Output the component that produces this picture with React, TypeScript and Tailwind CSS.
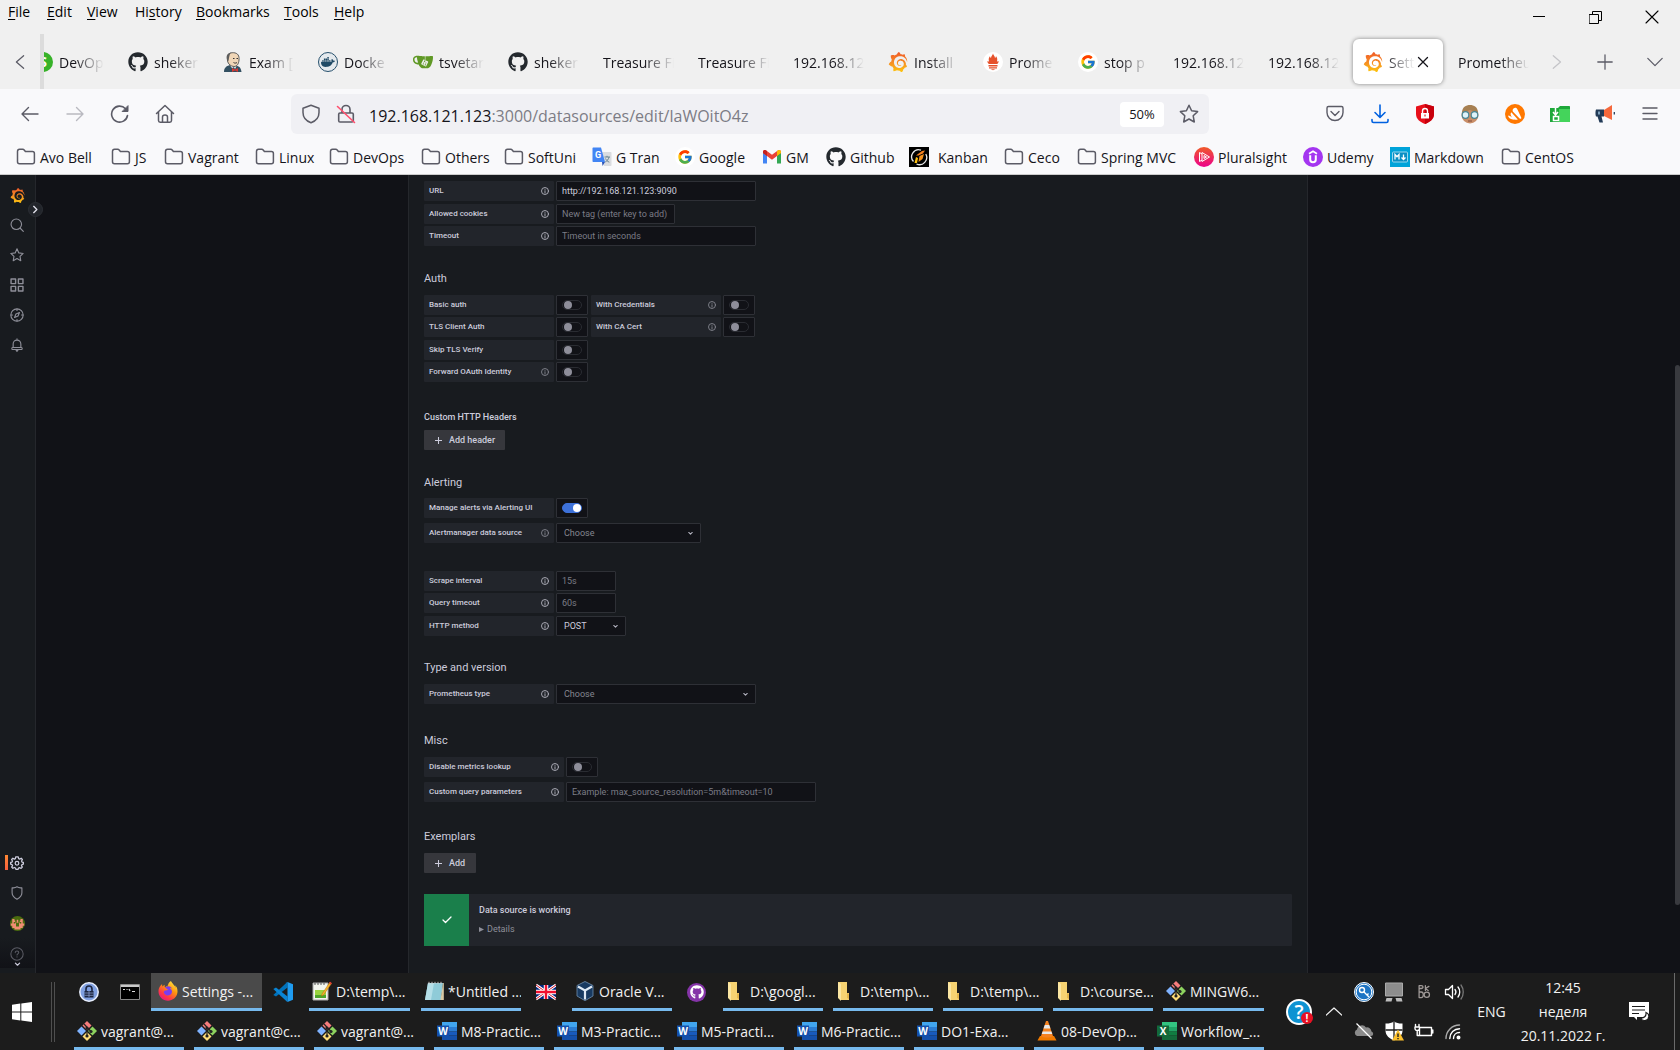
import React, { useState } from 'react';
import { FaGithub, FaFirefoxBrowser } from 'react-icons/fa';
import { FcGoogle } from 'react-icons/fc';
import { SiGrafana, SiDocker, SiGitea } from 'react-icons/si';

type Kids = { children: React.ReactNode };

/* ---------- shared drawings ---------- */

function Line({ children, size = 20, w = 1.4, cls = '', box = 20 }: Kids & { size?: number; w?: number; cls?: string; box?: number }) {
  return (
    <svg width={size} height={size} viewBox={`0 0 ${box} ${box}`} fill="none" stroke="currentColor" strokeWidth={w} strokeLinecap="round" strokeLinejoin="round" className={`shrink-0 ${cls}`} aria-hidden="true">
      {children}
    </svg>
  );
}

function Pic({ children, size = 20 }: Kids & { size?: number }) {
  return (
    <svg width={size} height={size} viewBox="0 0 20 20" className="shrink-0" aria-hidden="true">
      {children}
    </svg>
  );
}

function Gradients() {
  return (
    <svg width="0" height="0" className="absolute" aria-hidden="true">
      <defs>
        <linearGradient id="graf" x1="0" y1="0" x2="0" y2="1">
          <stop offset="0" stopColor="#f05a28" />
          <stop offset="0.5" stopColor="#f58a24" />
          <stop offset="1" stopColor="#fdc50f" />
        </linearGradient>
        <linearGradient id="fire" x1="0.9" y1="0" x2="0.2" y2="1">
          <stop offset="0" stopColor="#fff44f" />
          <stop offset="0.4" stopColor="#ff980e" />
          <stop offset="0.75" stopColor="#ff3647" />
          <stop offset="1" stopColor="#e31587" />
        </linearGradient>
        <linearGradient id="plural" x1="0" y1="0" x2="0" y2="1">
          <stop offset="0" stopColor="#f05a28" />
          <stop offset="1" stopColor="#ec008c" />
        </linearGradient>
      </defs>
    </svg>
  );
}

const Grafana = ({ size = 20 }: { size?: number }) => <SiGrafana size={size} fill="url(#graf)" className="shrink-0" />;
const Github = () => <FaGithub size={20} className="shrink-0 text-[#24292e]" />;

const Jenkins = () => (
  <Pic>
    <path d="M1 20c0-4 2-6 6-7l6 .5c4 1 5 3 5.500 6.500z" fill="#335061" />
    <path d="M6 12l3 4 2-1 1 2 2-4-1-2H7z" fill="#fff" />
    <path d="M4.500 6C4 2 7 .5 10.500.7 15 1 16.500 4 16 8c-.3 4-2 6.500-5 6.500S5 12 4.500 9z" fill="#f0d6b7" stroke="#3a3a3a" strokeWidth=".8" />
    <path d="M4 8C3 4 4 1.500 8 .6 6.500 2.500 6.500 4 6 6l-.5 3z" fill="#5d5d5d" />
    <path d="M10 6.500h1.500M13.500 6.500H15M10.500 10.500c1 .8 2.500.8 3.500 0" stroke="#333" strokeWidth="1" fill="none" />
    <path d="M9 16l3 1.500 3-1.500v4l-3-1.500L9 20z" fill="#d33833" />
  </Pic>
);

const Prometheus = () => (
  <Pic>
    <circle cx="10" cy="10" r="10" fill="#fff" />
    <path d="M10 1.500c.4 1.800 2 2.600 2 4.500 1-.5 1-1.300.9-2 1.300 1.600 1.800 3.500 1 5.600l1.900-.4c-.2 1.200-.8 2-1.600 2.800H5.800C5 11.200 4.400 10.400 4.200 9.200l1.900.4C5.300 7.500 5.800 5.600 7.100 4c-.1.7-.1 1.500.9 2 0-1.900 1.600-2.700 2-4.500z" fill="#e6522c" />
    <path d="M5.500 13h9v1.500h-9zM6 15.200h8v1.300H6zM7.500 17.200h5l-2.500 1z" fill="#e6522c" />
  </Pic>
);

const Google = () => (
  <span className="flex h-5 w-5 shrink-0 items-center justify-center rounded-full bg-white">
    <FcGoogle size={16} />
  </span>
);

const Docker = () => (
  <span className="flex h-5 w-5 shrink-0 items-center justify-center rounded-full border border-[#27516d] bg-[#e4e9ed] text-[#1f4a66]">
    <SiDocker size={14} />
  </span>
);

const SoftwareUni = () => (
  <Pic>
    <circle cx="10" cy="10" r="10" fill="#37b229" />
    <text x="10" y="15" textAnchor="middle" fontSize="14" fontWeight="700" fill="#fff" fontFamily="Open Sans, sans-serif">S</text>
  </Pic>
);

const Folder = () => (
  <Line w={1.5}><path d="M1.500 4.500c0-1.400.8-2.200 2-2.200h3.200c.8 0 1.200.3 1.700.9l1 1.300h7c1.300 0 2 .8 2 2v8.300c0 1.200-.8 2-2 2H3.500c-1.200 0-2-.8-2-2z" /></Line>
);

const Translate = () => (
  <Pic>
    <path d="M8 5h10.500c.6 0 1 .4 1 1v12c0 .6-.4 1-1 1H12z" fill="#dadce0" />
    <path d="M12.500 10h5.500M15 8.800V10M17 10c-.5 2.500-2 4-3.800 5M13.500 11.500c.8 1.700 2 2.900 3.800 3.700" stroke="#607d8b" strokeWidth=".9" fill="none" />
    <path d="M1.500.5H9L13 15H1.500C.9 15 .5 14.600.5 14V1.500c0-.6.4-1 1-1z" fill="#4285f4" />
    <path d="M10 15h3l-2.500 4z" fill="#2b55b8" />
    <text x="6" y="11" textAnchor="middle" fontSize="9" fontWeight="700" fill="#fff" fontFamily="Roboto, sans-serif">G</text>
  </Pic>
);

const Gmail = () => (
  <Pic>
    <path d="M1 16.500V5l4 3v8.500z" fill="#4285f4" />
    <path d="M15 16.500V8l4-3v11.500z" fill="#34a853" />
    <path d="M1 6V4.800C1 3 3 2.500 4.200 3.400L10 7.800l5.800-4.400C17 2.500 19 3 19 4.800V6l-9 6.800z" fill="#ea4335" />
    <path d="M15 4l.8-.6C17 2.500 19 3 19 4.800V6l-4 3z" fill="#fbbc04" />
    <path d="M1 6V4.800C1 3.500 2 3 3 3l2 1v5z" fill="#c5221f" />
  </Pic>
);

const Kanban = () => (
  <Pic>
    <path d="M0 0h20v20H0z" fill="#000" />
    <path d="M4.500 14.500A7 7 0 0 1 12 3.200M16.800 7A7.200 7.200 0 0 1 7.500 17" stroke="#e8e8e8" strokeWidth="1.300" fill="none" />
    <path d="M5.500 16l1.500-6 2 1-1 5z" fill="#ffc20e" />
    <path d="M7 8.500l6-4.500 3-.5-2 3-4.500 2z" fill="#f58220" />
    <path d="M9.500 15l1-6 4.500-2-1.500 5z" fill="#f7941d" />
  </Pic>
);

const Pluralsight = () => (
  <Pic>
    <circle cx="10" cy="10" r="10" fill="url(#plural)" />
    <path d="M5.500 5.500v9l2.500-1.400M8 5.500v9l7.500-4.500zM10 8.500v3l2.500-1.500z" fill="none" stroke="#fff" strokeWidth="1" />
    <path d="M5.500 5.500L8 7" stroke="#fff" strokeWidth="1" />
  </Pic>
);

const Udemy = () => (
  <Pic>
    <circle cx="10" cy="10" r="10" fill="#a435f0" />
    <path d="M6 6.800L10 4.300l4 2.500" stroke="#fff" strokeWidth="1.700" fill="none" />
    <path d="M7.200 8.200v4.300a2.800 2.800 0 0 0 5.600 0V8.200" stroke="#fff" strokeWidth="2" fill="none" />
  </Pic>
);

const MarkdownIcon = () => (
  <Pic>
    <path d="M0 0h20v20H0z" fill="#00a3d9" />
    <rect x="2.500" y="5" width="15" height="10" rx="1" fill="#0a8fc4" stroke="#bfe7f6" strokeWidth=".8" />
    <path d="M5 12.500v-5l2 2.300 2-2.300v5M13.500 7.500v4.500M11.500 10.500l2 2 2-2" stroke="#fff" strokeWidth="1.300" fill="none" />
  </Pic>
);

/* ---------- browser chrome ---------- */

const menus = [
  ['F', 'ile', '', 'w-[39px]'],
  ['E', 'dit', '', 'w-10'],
  ['V', 'iew', '', 'w-12'],
  ['s', 'tory', 'Hi', 'w-[61px]'],
  ['B', 'ookmarks', '', 'w-[88px]'],
  ['T', 'ools', '', 'w-[50px]'],
  ['H', 'elp', '', 'w-10'],
];

function TopBar() {
  return (
    <div className="flex h-[34px] items-start justify-between">
      <nav className="flex pl-2 leading-6">
        {menus.map(([key, rest, before, w]) => (
          <button key={rest} className={`${w} whitespace-nowrap text-left text-black`}>
            {before}<span className="underline underline-offset-2">{key}</span>{rest}
          </button>
        ))}
      </nav>
      <div className="flex h-[34px] text-black">
        <button aria-label="Minimize" className="flex w-[57px] items-center justify-center"><Line size={12} box={12} w={1}><path d="M0 5.500h12" /></Line></button>
        <button aria-label="Restore" className="flex w-[57px] items-center justify-center"><Line size={13} box={13} w={1}><path d="M.5 3.500h9v9h-9zM3.500 3V.5h9v9H10" /></Line></button>
        <button aria-label="Close" className="flex w-14 items-center justify-center"><Line size={14} box={14} w={1.1}><path d="M1 1l12 12M13 1L1 13" /></Line></button>
      </div>
    </div>
  );
}

const tabs: [React.ReactNode, string][] = [
  [<SoftwareUni />, 'DevOp'],
  [<Github />, 'sheker'],
  [<Jenkins />, 'Exam ['],
  [<Docker />, 'Docke'],
  [<SiGitea size={20} className="shrink-0 text-[#609926]" />, 'tsvetar'],
  [<Github />, 'sheker'],
  [null, 'Treasure Fi'],
  [null, 'Treasure Fi'],
  [null, '192.168.12'],
  [<Grafana />, 'Install'],
  [<Prometheus />, 'Prome'],
  [<Google />, 'stop p'],
  [null, '192.168.12'],
  [null, '192.168.12'],
  [<Grafana />, 'Sett'],
  [null, 'Prometheu'],
];

function TabStrip() {
  return (
    <div className="flex h-[55px] items-center text-[#5b5b66]">
      <button aria-label="Scroll tabs left" className="flex w-10 shrink-0 justify-center"><Line size={18}><path d="M14 3l-8 7 8 7" /></Line></button>
      <div className="flex h-full min-w-0 flex-1 items-center overflow-hidden border-l-4 border-[#dcdcdc]">
        <div className="-ml-[21px] flex gap-[5px]" role="tablist">
          {tabs.map(([icon, title], i) => {
            const active = i === 14;
            return (
              <div key={i} className={`flex h-[45px] w-[90px] shrink-0 items-center rounded-md pl-[10px] text-[#15141a] ${active ? 'bg-white pr-3 shadow-[0_0_4px_rgba(0,0,0,0.45)]' : 'pr-[9px]'}`}>
                <button role="tab" aria-selected={active} className="flex min-w-0 flex-1 items-center gap-[6px]">
                  {icon}
                  <span className="min-w-0 flex-1 overflow-hidden whitespace-nowrap pt-0.5 text-left leading-6 [mask-image:linear-gradient(to_left,transparent,black_30px)]">{title}</span>
                </button>
                {active && <button aria-label="Close tab" className="mx-[2px]"><Line size={12} box={12} w={1.3}><path d="M1.500 1.500l9 9M10.500 1.500l-9 9" /></Line></button>}
              </div>
            );
          })}
        </div>
      </div>
      <button aria-label="Scroll tabs right" className="flex w-10 shrink-0 justify-center pr-2 text-[#c4c4c8]"><Line size={18}><path d="M7 3l8 7-8 7" /></Line></button>
      <button aria-label="New tab" className="flex w-[50px] shrink-0 justify-center"><Line size={18}><path d="M10 2v16M2 10h16" /></Line></button>
      <button aria-label="List all tabs" className="flex w-[50px] shrink-0 justify-center"><Line size={18}><path d="M2 6l8 8 8-8" /></Line></button>
    </div>
  );
}

const extensions: [string, React.ReactNode][] = [
  ['Pocket', <Line><path d="M3.500 2.500h13c1 0 1.500.6 1.500 1.500v4.500a8 8 0 0 1-16 0V4c0-.9.5-1.500 1.500-1.500zM6 7.500l4 4 4-4" /></Line>],
  ['Downloads', <span className="text-[#0061e0]"><Line w={1.6}><path d="M10 1v12M5 8.500l5 5 5-5M2 15.500v1.500c0 1 .6 1.500 1.500 1.500h13c.9 0 1.500-.5 1.500-1.500v-1.500" /></Line></span>],
  ['Ad blocker', <Pic><path d="M10 0l9 2.500V10c0 5-4 8-9 10-5-2-9-5-9-10V2.500z" fill="#e8101a" /><path d="M10 0l9 2.500V10c0 5-4 8-9 10z" fill="#c8000c" /><path d="M6 9h8v5.500H6z" fill="#fff" /><path d="M7.500 9V7a2.500 2.500 0 0 1 5 0v2" stroke="#fff" strokeWidth="1.400" fill="none" /><path d="M10 10.500v2" stroke="#d00" /></Pic>],
  ['Reader', <Pic><circle cx="10" cy="11" r="8.500" fill="#c98e68" /><path d="M2 9C2 3 6 1 10 1s8 2 8 8L10 6z" fill="#a78052" /><circle cx="5.500" cy="11" r="3.300" fill="#dff3fa" stroke="#4a8796" strokeWidth="1.200" /><circle cx="14.500" cy="11" r="3.300" fill="#dff3fa" stroke="#4a8796" strokeWidth="1.200" /><path d="M8 17h4" stroke="#7e4c3e" /></Pic>],
  ['Avast', <Pic><circle cx="10" cy="10" r="10" fill="#ff7800" /><path d="M8.500 4.500c1.300-1.300 3-1 3.700.5l4 8.500c.5 1.200-.7 1.800-1.600 1L8.300 8C7.200 6.900 7.500 5.500 8.500 4.500z" fill="#fff" /><path d="M6.300 8.300l6.500 7.200c-1.800.6-3.800.4-5.500-.4L5.500 10z" fill="#fff" /><path d="M3.500 11.500c2 .5 4 2 5.500 4-2.300.3-4.300-.7-5.300-2.200-.5-.7-.7-1.400-.2-1.800z" fill="#fff" /></Pic>],
  ['Downloader', <Pic><path d="M0 4h8l2-2h9c.6 0 1 .4 1 1v15H0z" fill="#1ea83a" /><path d="M9 5h11v13H9z" fill="#44d45b" /><path d="M5.500 4v6M3 8l2.500 3L8 8M3.500 12.500h5v4h-5z" stroke="#fff" strokeWidth="1.500" fill="none" /></Pic>],
  ['Announcements', <Pic><path d="M9 6l8-5v15l-8-4z" fill="#f5683c" /><path d="M1 5.500h8v7H6.500l1.500 6H4.500l-2-6H1C.3 11 .3 7 1 5.500z" fill="#233b57" /><path d="M4 7.500v3" stroke="#9fc3dc" strokeWidth="1.500" /><path d="M19.300 8v2.500" stroke="#233b57" strokeWidth="1.300" /></Pic>],
  ['Menu', <Line><path d="M3 4h14M3 9.500h14M3 15h14" /></Line>],
];

function Toolbar() {
  return (
    <div className="flex h-[50px] items-center pl-[7px] pr-2 text-[#5b5b66]">
      <div className="flex w-[284px] shrink-0">
        <button aria-label="Back" className="flex w-[45px] justify-center"><Line><path d="M18 10H2M8.500 3.500L2 10l6.500 6.500" /></Line></button>
        <button aria-label="Forward" className="flex w-[45px] justify-center text-[#b9b9c0]"><Line><path d="M2 10h16M11.500 3.500L18 10l-6.500 6.500" /></Line></button>
        <button aria-label="Reload" className="flex w-[45px] justify-center"><Line w={1.6}><path d="M17.500 11.500a8 8 0 1 1-2-6.800" /><path d="M18 2v5.500h-5.500z" fill="currentColor" strokeWidth="1" /></Line></button>
        <button aria-label="Home" className="flex w-[45px] justify-center"><Line w={1.5}><path d="M1.500 9.500L10 1.500l8.500 8M3.500 8v8.500c0 1 .6 1.700 1.700 1.700h9.600c1.100 0 1.700-.7 1.700-1.700V8M7.500 18v-5c0-1.300.8-2 2.500-2s2.500.7 2.500 2v5" /></Line></button>
      </div>
      <div className="flex h-10 min-w-0 flex-1 items-center rounded-md bg-[#f0f0f4] pl-[10px] pr-[10px]">
        <Line w={1.5}><path d="M10 1.200l8 3v4.300c0 5-3.200 8.500-8 10.200-4.800-1.700-8-5.200-8-10.200V4.200z" /></Line>
        <span className="ml-[15px] flex"><Line w={1.6}><path d="M6 9V5.500a4 4 0 0 1 8 0V9M4 9h12c.8 0 1.300.5 1.300 1.300v6.400c0 .8-.5 1.300-1.300 1.300H4c-.8 0-1.300-.5-1.300-1.300v-6.400C2.700 9.500 3.200 9 4 9z" /><path d="M1.500 2.500l17 16" stroke="#ff4f6e" /></Line></span>
        <div className="ml-[13px] min-w-0 flex-1 truncate pt-[3px] text-base text-[#7c7c85]">
          <span className="text-[#15141a]">192.168.121.123</span>:3000/datasources/edit/laWOitO4z
        </div>
        <button className="h-[25px] w-11 rounded bg-white pt-px text-[13px] text-[#15141a]">50%</button>
        <button aria-label="Bookmark this page" className="ml-[15px]"><Line w={1.5}><path d="M10 1.200l2.600 5.600 6 .8-4.400 4.200 1.100 6.200L10 15l-5.300 3 1.100-6.200L1.400 7.600l6-.8z" /></Line></button>
      </div>
      <div className="ml-[103px] flex shrink-0">
        {extensions.map(([name, icon]) => (
          <button key={name} aria-label={name} className="flex w-[45px] justify-center">{icon}</button>
        ))}
      </div>
    </div>
  );
}

const bookmarks: [string, string, React.ReactNode?][] = [
  ['Avo Bell', 'w-[95px]'],
  ['JS', 'w-[53px]'],
  ['Vagrant', 'w-[91px]'],
  ['Linux', 'w-[74px]'],
  ['DevOps', 'w-[92px]'],
  ['Others', 'w-[83px]'],
  ['SoftUni', 'w-[88px]'],
  ['G Tran', 'w-[83px]', <Translate />],
  ['Google', 'w-[87px]', <Google />],
  ['GM', 'w-[64px]', <Gmail />],
  ['Github', 'w-[83px]', <Github />],
  ['Kanban', 'w-[95px]', <span className="mr-[5px]"><Kanban /></span>],
  ['Ceco', 'w-[73px]'],
  ['Spring MVC', 'w-[117px]'],
  ['Pluralsight', 'w-[109px]', <Pluralsight />],
  ['Udemy', 'w-[87px]', <Udemy />],
  ['Markdown', 'w-[111px]', <MarkdownIcon />],
  ['CentOS', 'w-[90px]'],
];

function Bookmarks() {
  return (
    <div className="flex h-9 overflow-hidden border-b border-[#cccccc] pl-4 text-[#15141a]">
      {bookmarks.map(([name, w, icon]) => (
        <a key={name} href="#" className={`${w} flex shrink-0 items-center gap-1 whitespace-nowrap`}>
          {icon ?? <span className="text-[#5b5b66]"><Folder /></span>}
          <span className="pt-0.5">{name}</span>
        </a>
      ))}
    </div>
  );
}

/* ---------- Grafana ---------- */

const navTop: [string, React.ReactNode][] = [
  ['Home', <Grafana size={15} />],
  ['Search', <Line size={14} w={1.6}><circle cx="9" cy="9" r="7.500" /><path d="M15 15l4 4" /></Line>],
  ['Starred', <Line size={14} w={1.6}><path d="M10 1.200l2.600 5.800 6.200.8-4.500 4.200 1.100 6.200L10 15l-5.400 3.200L5.700 12 1.200 7.800l6.200-.8z" /></Line>],
  ['Dashboards', <Line size={14} w={2}><path d="M1.500 1.500h6.500v6.500H1.500zM12 1.500h6.500v6.500H12zM1.500 12h6.500v6.500H1.500zM12 12h6.500v6.500H12z" /></Line>],
  ['Explore', <Line size={14} w={1.6}><circle cx="10" cy="10" r="8.800" /><path d="M13.500 6.500l-2 5-5 2 2-5zM10 1.500v2M10 16.500v2M1.500 10h2M16.500 10h2" /></Line>],
  ['Alerting', <Line size={14} w={1.6}><path d="M4.500 13.500V8.500a5.500 5.500 0 0 1 11 0v5M3.500 13.500h13c1.200 0 1.200 3 0 3h-13c-1.200 0-1.200-3 0-3zM8.500 17l1.500 2 1.500-2M10 1v2" /></Line>],
];

const navBottom: [string, React.ReactNode][] = [
  ['Configuration', <Line size={14} w={1.8} cls="text-[#ccccdc]"><path d="M8.200 1.300h3.600l.5 2.500 1.500.7 2.200-1.300 1.700 1.800-1.200 2.300.6 1.400 2 .5v2.400l-2 .6-.7 1.500 1.200 2.200-1.800 1.800-2.200-1.200-1.400.6-.6 2h-3.200l-.6-2-1.500-.7-2.200 1.200-1.700-1.700 1.200-2.200-.7-1.500-2-.6V9.200l2-.5.6-1.500-1.200-2.200 1.800-1.800 2.200 1.300 1.400-.7z" /><circle cx="10" cy="10.300" r="2.600" /></Line>],
  ['Server admin', <Line size={14} w={1.6}><path d="M10 1.200c2 1.300 4.500 1.800 7 1.300v7c0 4.500-3 7-7 9.300-4-2.300-7-4.800-7-9.300v-7c2.500.5 5 0 7-1.300z" /></Line>],
  ['Profile', <Pic size={15}><circle cx="10" cy="10" r="10" fill="#4a6b0e" /><path d="M3 4h3v2h1v3h2V5h2v4h2V6h1V4h3v6h2v3h-2v3h-3v2H6v-2H3v-3H1v-3h2z" fill="#f08d73" /><path d="M8 9h4v5H8zM5 8h2v2H5zM13 8h2v2h-2z" fill="#4a6b0e" /></Pic>],
];

function SideNav() {
  return (
    <nav className="relative flex w-9 shrink-0 flex-col justify-between border-r border-[#25272c] bg-[#181b1f] pt-[5px] text-[#8e8f99]">
      <div className="pr-px">
        {navTop.map(([name, icon]) => (
          <a key={name} href="#" aria-label={name} className="flex h-[30px] items-center justify-center">{icon}</a>
        ))}
      </div>
      <div className="pb-[5px]">
        {navBottom.map(([name, icon], i) => (
          <a key={name} href="#" aria-label={name} className="relative flex h-[30px] items-center justify-center pr-px">
            {i === 0 && <span className="absolute left-[5px] top-[7px] h-[15px] w-[3px] bg-gradient-to-b from-[#ff8833] to-[#f55f3e]" />}
            {icon}
          </a>
        ))}
        <a href="#" aria-label="Help" className="flex h-[30px] flex-col items-center justify-end bg-gradient-to-b from-[#181b1f] to-[#111217] pr-px text-[#5a5b64]">
          <Line size={14} w={1.5}><circle cx="10" cy="10" r="8.800" /><path d="M7.500 8c0-3.300 5-3 5 0 0 1.700-2.500 1.800-2.500 3.500M10 14v.3" /></Line>
          <Line size={7} w={3.5} cls="text-[#ccccdc]"><path d="M4 6l6 6 6-6" /></Line>
        </a>
      </div>
      <button aria-label="Expand menu" className="absolute left-7 top-[27px] flex h-[15px] w-[15px] items-center justify-center rounded-full border border-[#2c2f35] bg-[#22252b] text-[#e0e0ea]">
        <Line size={9} w={3}><path d="M6 3l7 7-7 7" /></Line>
      </button>
    </nav>
  );
}

const Info = ({ dim }: { dim?: boolean }) => (
  <Line size={8} box={16} w={1.8} cls={dim ? 'text-[#85868f]' : 'text-[#b4b4c0]'}><circle cx="8" cy="8" r="7" /><path d="M8 7.500V12M8 4.500v.2" /></Line>
);

function Field({ id, label, info, dim, wide, children }: Kids & { id: string; label: string; info?: boolean; dim?: boolean; wide?: boolean }) {
  return (
    <div className="flex h-5 gap-0.5">
      <label htmlFor={id} className={`${wide ? 'w-[140px]' : 'w-[130px]'} flex shrink-0 items-center justify-between whitespace-nowrap rounded-[1px] bg-[#22252b] pl-[5px] pr-[5px] text-[8px] font-medium leading-[10px] text-[#ccccdc]`}>
        {label}
        {info && <Info dim={dim} />}
      </label>
      {children}
    </div>
  );
}

function Text({ id, w, placeholder, value }: { id: string; w: string; placeholder?: string; value?: string }) {
  return (
    <input id={id} type="text" defaultValue={value} placeholder={placeholder} className={`${w} h-5 rounded-[1px] border border-[#2e3036] bg-[#111217] px-[5px] text-[9px] leading-3 text-[#ccccdc] outline-none placeholder:text-[#7b7c86]`} />
  );
}

function Switch({ id, on }: { id: string; on?: boolean }) {
  const [checked, setChecked] = useState(!!on);
  return (
    <span className="flex h-5 w-8 shrink-0 items-center justify-center rounded-[1px] border border-[#2e3036] bg-[#111217]">
      <input
        id={id}
        type="checkbox"
        role="switch"
        checked={checked}
        onChange={(e) => setChecked(e.target.checked)}
        className="flex h-[10px] w-5 appearance-none items-center rounded-full border border-[#2a2c32] bg-[#111217] before:ml-px before:h-2 before:w-2 before:rounded-full before:bg-[#8e8e9a] checked:justify-end checked:border-[#3d71d9] checked:bg-[#3d71d9] checked:before:bg-white"
      />
    </span>
  );
}

function Select({ id, w, value, bright }: { id: string; w: string; value: string; bright?: boolean }) {
  return (
    <span className={`${w} relative block h-5`}>
      <select id={id} className={`block h-5 w-full appearance-none rounded-[1px] border border-[#2e3036] bg-[#111217] px-[7px] text-[9px] leading-3 outline-none ${bright ? 'text-[#ccccdc]' : 'text-[#85868f]'}`}>
        <option>{value}</option>
      </select>
      <span className="pointer-events-none absolute right-[7px] top-[7px] text-[#b4b4c0]"><Line size={7} w={3}><path d="M5 7l5 5 5-5" /></Line></span>
    </span>
  );
}

const Heading = ({ children, cls }: Kids & { cls: string }) => (
  <h3 className={`${cls} text-[11px] leading-4 text-[#ccccdc]`}>{children}</h3>
);

const AddButton = ({ children, cls }: Kids & { cls: string }) => (
  <button className={`${cls} flex h-5 items-center gap-[7px] whitespace-nowrap rounded-[1px] bg-[#36373c] pl-[11px] text-[9px] font-medium leading-3 text-[#ccccdc]`}>
    <Line size={7} w={3}><path d="M10 1v18M1 10h18" /></Line>
    {children}
  </button>
);

function Settings() {
  return (
    <main className="min-w-0 flex-1 bg-[#111217]">
      <form className="mx-auto h-full max-w-[900px] border-x border-[#25272c] bg-[#181b1f] px-[15px] pb-[27px] pt-[6px]" onSubmit={(e) => e.preventDefault()}>
        <Field id="url" label="URL" info><Text id="url" w="w-[200px]" value="http://192.168.121.123:9090" /></Field>
        <div className="mb-0.5 mt-[3px]"><Field id="cookies" label="Allowed cookies" info><Text id="cookies" w="w-[119px]" placeholder="New tag (enter key to add)" /></Field></div>
        <Field id="timeout" label="Timeout" info><Text id="timeout" w="w-[200px]" placeholder="Timeout in seconds" /></Field>

        <Heading cls="mt-[25px] mb-2">Auth</Heading>
        <div className="flex gap-[3px]">
          <Field id="basic" label="Basic auth"><Switch id="basic" /></Field>
          <Field id="cred" label="With Credentials" info dim><Switch id="cred" /></Field>
        </div>
        <div className="mb-[3px] mt-0.5 flex gap-[3px]">
          <Field id="tls" label="TLS Client Auth"><Switch id="tls" /></Field>
          <Field id="ca" label="With CA Cert" info dim><Switch id="ca" /></Field>
        </div>
        <Field id="skip" label="Skip TLS Verify"><Switch id="skip" /></Field>
        <div className="mt-0.5"><Field id="oauth" label="Forward OAuth Identity" info dim><Switch id="oauth" /></Field></div>

        <h6 className="mb-[5px] mt-[27px] text-[9px] font-medium leading-4 text-[#ccccdc]">Custom HTTP Headers</h6>
        <AddButton cls="w-[81px]">Add header</AddButton>

        <Heading cls="mt-[25px] mb-[7px]">Alerting</Heading>
        <Field id="manage" label="Manage alerts via Alerting UI"><Switch id="manage" on /></Field>
        <div className="mb-7 mt-[5px]"><Field id="am" label="Alertmanager data source" info dim><Select id="am" w="w-[145px]" value="Choose" /></Field></div>

        <Field id="scrape" label="Scrape interval" info><Text id="scrape" w="w-[60px]" placeholder="15s" /></Field>
        <div className="mb-[3px] mt-0.5"><Field id="query" label="Query timeout" info><Text id="query" w="w-[60px]" placeholder="60s" /></Field></div>
        <Field id="method" label="HTTP method" info><Select id="method" w="w-[70px]" value="POST" bright /></Field>

        <Heading cls="mt-6 mb-2">Type and version</Heading>
        <Field id="ptype" label="Prometheus type" info><Select id="ptype" w="w-[200px]" value="Choose" /></Field>

        <Heading cls="mt-[29px] mb-2">Misc</Heading>
        <Field id="lookup" label="Disable metrics lookup" info wide><Switch id="lookup" /></Field>
        <div className="mt-[5px]"><Field id="params" label="Custom query parameters" info wide><Text id="params" w="w-[250px]" placeholder="Example: max_source_resolution=5m&timeout=10" /></Field></div>

        <Heading cls="mt-[27px] mb-2">Exemplars</Heading>
        <AddButton cls="w-[52px]">Add</AddButton>

        <div role="status" className="mt-[21px] flex h-[52px] rounded-[1px] bg-[#22252b]">
          <div className="flex w-[45px] items-center justify-center bg-[#1a7f4b] text-white"><Line size={10} w={2.6}><path d="M2 10l5 5L18 4" /></Line></div>
          <div className="pl-[10px] pt-[10px] text-[9px]">
            <p className="font-medium leading-3 text-[#ccccdc]">Data source is working</p>
            <details className="mt-[7px] leading-3 text-[#8e8f99]"><summary className="flex list-none items-center gap-[3px]"><svg width="5" height="5" viewBox="0 0 5 5" fill="currentColor" aria-hidden="true"><path d="M0 0l5 2.500L0 5z" /></svg>Details</summary></details>
          </div>
        </div>
      </form>
    </main>
  );
}

/* ---------- Windows taskbar ---------- */

const Git = () => (
  <Pic>
    <path d="M10 0l4.500 4.500L10 9 5.500 4.500z" fill="#f57c7c" />
    <path d="M4.500 5.500L9 10l-4.500 4.500L0 10z" fill="#80b3ff" />
    <path d="M15.500 5.500L20 10l-4.500 4.500L11 10z" fill="#8dd35f" />
    <path d="M10 11l4.500 4.500L10 20l-4.500-4.500z" fill="#ffdd77" />
    <path d="M7 3l7 7.500M10 6v9" stroke="#222" strokeWidth="1.200" />
    <circle cx="10" cy="7" r="1.600" fill="#222" /><circle cx="14" cy="10.500" r="1.600" fill="#222" /><circle cx="10" cy="15" r="1.600" fill="#222" />
  </Pic>
);

function Office({ letter, a, b, c, d }: { letter: string; a: string; b: string; c: string; d: string }) {
  return (
    <Pic>
      <path d="M5 1h15v5H5z" fill={a} /><path d="M5 6h15v4.500H5z" fill={b} /><path d="M5 10.500h15v4H5z" fill={c} /><path d="M5 14.500h15V19H5z" fill={d} />
      <path d="M0 4.500h12v11H0z" fill={d} />
      <text x="6" y="13.500" textAnchor="middle" fontSize="10" fontWeight="700" fill="#fff" fontFamily="Open Sans, sans-serif">{letter}</text>
    </Pic>
  );
}
const Word = () => <Office letter="W" a="#41a5ee" b="#2b7cd3" c="#185abd" d="#1550ab" />;
const Excel = () => <Office letter="X" a="#33c481" b="#21a366" c="#107c41" d="#13693b" />;

const YellowFolder = () => (
  <Pic><path d="M2 1h9v11h2v7H4z" fill="#f7d372" /><path d="M2 1l3 2v17l-3-3z" fill="#fbe6a3" /><path d="M11 12l2 1v5l-2-1z" fill="#e5b64c" /></Pic>
);
const Vlc = () => (
  <Pic><path d="M3 15h14l2.500 4.500H.5z" fill="#f07a00" /><path d="M9 0h2l5 15c-3 2-9 2-12 0z" fill="#f58220" /><path d="M7.800 4h4.400l1.300 3.500h-7zM5.600 10.500h8.800l.9 2.500H4.700z" fill="#e8e8e8" /></Pic>
);
const Lock = () => (
  <Pic><circle cx="10" cy="10" r="9.200" fill="#7f9fe0" stroke="#e8eefc" strokeWidth="1.500" /><path d="M5.500 9h9v6.500h-9z" fill="#1b2540" /><path d="M7 9V7a3 3 0 0 1 6 0v2" stroke="#1b2540" strokeWidth="1.600" fill="none" /><path d="M5.500 11h9M5.500 13.300h9M10 9v6" stroke="#8fa5d8" strokeWidth=".7" /></Pic>
);
const Cmd = () => (
  <Pic><path d="M.5 2.500h19v15H.5z" fill="#000" stroke="#8a8a8a" /><path d="M1 3h18v2H1z" fill="#c8c8c8" /><path d="M3 7.500h2M6.500 7.500h1M9 7l1 2M12 9.500h3" stroke="#ddd" strokeWidth="1.200" /></Pic>
);
const Firefox = () => (
  <span className="relative flex h-5 w-5 shrink-0 items-center justify-center">
    <span className="absolute left-[5px] top-[5px] h-[11px] w-[11px] rounded-full bg-[#7a3cf0]" />
    <FaFirefoxBrowser size={20} fill="url(#fire)" className="relative" />
  </span>
);
const Code = () => (
  <Pic><path d="M14.500 0v5.500L3 14.500 .3 13 14 .3z" fill="#0072bb" /><path d="M14.500 20v-5.500L3 5.500.3 7 14 19.700z" fill="#0a84d4" /><path d="M14.500 0L20 2.300v15.400L14.500 20z" fill="#1f9cf0" /></Pic>
);
const NotepadPlus = () => (
  <Pic><path d="M1 2h15v17H1z" fill="#f3f6ee" stroke="#a9a9a9" /><path d="M3 9h11v8H3z" fill="#9ad43e" /><path d="M3 14h11v3H3z" fill="#4ea62a" /><path d="M3 2v2M6 2v2M9 2v2M12 2v2" stroke="#555" /><path d="M18 1L10 13l-.5 2 2-1L19.500 2.500z" fill="#f5b72d" stroke="#b86b12" strokeWidth=".5" /><path d="M17 2l2 1.500.7-1.500-1.500-1.200z" fill="#d33" /></Pic>
);
const Notepad = () => (
  <Pic><path d="M4 2h15l-2 17H1z" fill="#8fcbd8" /><path d="M4 2h6L7 19H1z" fill="#b5dfe8" /><path d="M16.500 19l2.500-17h.8v17z" fill="#d9c9a4" /><path d="M5 3V.8M8 3V.8M11 3V.8M14 3V.8M17 3V.8" stroke="#ccc" /></Pic>
);
const Flag = () => (
  <Pic><path d="M0 3h20v14H0z" fill="#00247d" /><path d="M0 3l20 14M20 3L0 17" stroke="#fff" strokeWidth="3" /><path d="M0 3l20 14M20 3L0 17" stroke="#cf142b" strokeWidth="1" /><path d="M10 3v14M0 10h20" stroke="#fff" strokeWidth="4.500" /><path d="M10 3v14M0 10h20" stroke="#f01030" strokeWidth="2.400" /></Pic>
);
const VBox = () => (
  <Pic><path d="M10 .5l8 4v10.500l-8 4.700-8-4.700V4.500z" fill="#183a61" stroke="#6f8fb0" strokeWidth=".8" /><path d="M3 5.500l7 4 7-4M10 10v8.500" stroke="#dfe9f4" strokeWidth="2.200" fill="none" /></Pic>
);
const GithubDesktop = () => (
  <span className="flex h-[19px] w-[19px] items-center justify-center rounded-full bg-[#8534a8] text-white"><FaGithub size={14} /></span>
);

function Task({ icon, label, w, active }: { icon: React.ReactNode; label: string; w: string; active?: boolean }) {
  return (
    <button className={`${w} flex h-full shrink-0 items-center gap-1 overflow-hidden whitespace-nowrap border-b-[3px] border-[#76b9ed] text-[#f2f2f2] ${active ? 'bg-[#4a4a4a] pl-[7px]' : 'pl-[3px]'}`}>
      {icon}<span className="pt-0.5">{label}</span>
    </button>
  );
}

const Slot = ({ w, name, children }: Kids & { w: string; name: string }) => (
  <button aria-label={name} className={`${w} flex h-full shrink-0 items-center justify-center`}>{children}</button>
);

const row2: [React.ReactNode, string][] = [
  [<Git />, 'vagrant@...'],
  [<Git />, 'vagrant@c...'],
  [<Git />, 'vagrant@...'],
  [<Word />, 'M8-Practic...'],
  [<Word />, 'M3-Practic...'],
  [<Word />, 'M5-Practi...'],
  [<Word />, 'M6-Practic...'],
  [<Word />, 'DO1-Exa...'],
  [<Vlc />, '08-DevOp...'],
  [<Excel />, 'Workflow_...'],
];

const tray: [string, React.ReactNode][] = [
  ['Password manager', <Pic><circle cx="10" cy="10" r="9.500" fill="#1d74c4" stroke="#fff" strokeWidth="1" /><circle cx="10" cy="10" r="7.800" fill="none" stroke="#fff" strokeWidth="1" /><circle cx="8" cy="8" r="2.500" fill="none" stroke="#fff" strokeWidth="1.400" /><path d="M10 10l5 5M13 13l1.500-1.500" stroke="#fff" strokeWidth="1.400" /></Pic>],
  ['Display', <Pic><path d="M1.500 1h17v13h-17z" fill="#8d8d8d" stroke="#aaa" /><path d="M2.500 16h6l-1 3.500h-6zM11.500 16h6l1 3.500h-6z" fill="#bdbdbd" /></Pic>],
  ['Keyboard backlight', <span className="text-[#a09a98]"><Line size={14} w={1.8}><path d="M3 1h3c3.500 0 3.500 4 0 4H3zM3 10h3c4 0 4 8 0 8H3zM3 1v17M12 1v7M17 2l-5 3 4 3" /><circle cx="14" cy="14" r="3.800" /></Line></span>],
  ['Volume', <span className="text-white"><Line w={1.3}><path d="M1.500 7.500h3l4-4v13l-4-4h-3zM11 7.500c1 1.300 1 3.700 0 5M14 5c2.300 2.800 2.300 7.200 0 10" /><path d="M17 3c3 4 3 10 0 14" stroke="#777" /></Line></span>],
  ['OneDrive', <Pic><path d="M3 15a3.500 3.500 0 0 1 0-6.500 5 5 0 0 1 9-2 4.500 4.500 0 0 1 5.500 4c2.300.7 2.300 4.500-.5 4.500z" fill="#8b8b8b" /><path d="M2.500 2.500l15 15" stroke="#fff" strokeWidth="1.300" /></Pic>],
  ['Security', <Pic><path d="M10 .5c3 1.800 6 2.300 8.500 2v7c0 5-4 8-8.500 10-4.500-2-8.500-5-8.500-10v-7c2.500.3 5.500-.2 8.500-2z" fill="#fff" /><path d="M10 .5v19M1.500 9h17" stroke="#1c1c1c" strokeWidth="1.300" /><path d="M14 8.500l6 11H8z" fill="#fbc02d" /><path d="M14 12.500v3.500M14 17v1.300" stroke="#222" strokeWidth="1.400" /></Pic>],
  ['Battery', <span className="text-white"><Line w={1.4}><path d="M5.500 6.500h12v8h-12zM18.800 9v3M1.500 3.500v2.500M5 3.500v2.500M1 6h4.500v1.500c0 1.200-.8 2-2.200 2S1 8.700 1 7.500zM3.200 10v4.500H5" /></Line></span>],
  ['Wi-Fi', <Line w={1.4} cls="text-white"><path d="M9.500 17.500c0-3.500 2.500-6 6-6M5.800 17.500c0-5.500 4.200-9.700 9.700-9.700" /><path d="M2 17.500C2 10 8 4 15.500 4" stroke="#aaa" /><circle cx="14.500" cy="16.500" r="1.300" fill="currentColor" /></Line>],
];

function Taskbar() {
  return (
    <footer className="flex h-[77px] shrink-0 items-center bg-[#1c1c1c] text-[#f2f2f2]">
      <button aria-label="Start" className="flex w-11 shrink-0 justify-center text-white">
        <svg width="20" height="20" viewBox="0 0 20 20" fill="currentColor" aria-hidden="true"><path d="M0 2.800l8.300-1.200v7.900H0zM9.300 1.500L20 0v9.500H9.300zM0 10.500h8.300v7.900L0 17.200zM9.300 10.500H20V20L9.300 18.500z" /></svg>
      </button>
      <span className="ml-[7px] h-[60px] w-1 shrink-0 border-x border-[#4f4f4f]" />
      <div className="flex h-full min-w-0 flex-1 flex-col justify-between overflow-hidden pl-[14px]">
        <div className="flex h-[38px]">
          <Slot w="w-10" name="KeePass"><Lock /></Slot>
          <Slot w="w-[42px]" name="Command prompt"><Cmd /></Slot>
          <Task icon={<Firefox />} label="Settings -..." w="w-[111px]" active />
          <Slot w="w-[42px] mr-[5px]" name="Visual Studio Code"><Code /></Slot>
          <Task icon={<NotepadPlus />} label={'D:\\temp\\...'} w="w-[101px]" />
          <span className="w-[11px] shrink-0" />
          <Task icon={<Notepad />} label="*Untitled ..." w="w-[100px]" />
          <Slot w="w-[49px] mr-[2px]" name="Keyboard layout"><Flag /></Slot>
          <Task icon={<VBox />} label="Oracle V..." w="w-[100px]" />
          <Slot w="w-[49px] mr-[2px]" name="GitHub Desktop"><GithubDesktop /></Slot>
          <div className="flex gap-[10px]">
            <Task icon={<YellowFolder />} label={'D:\\googl...'} w="w-[100px]" />
            <Task icon={<YellowFolder />} label={'D:\\temp\\...'} w="w-[100px]" />
            <Task icon={<YellowFolder />} label={'D:\\temp\\...'} w="w-[100px]" />
            <Task icon={<YellowFolder />} label={'D:\\course...'} w="w-[100px]" />
            <Task icon={<Git />} label="MINGW6..." w="w-[101px]" />
          </div>
        </div>
        <div className="flex h-9 gap-[10px] pl-[5px]">
          {row2.map(([icon, label], i) => <Task key={i} icon={icon} label={label} w="w-[110px]" />)}
        </div>
      </div>
      <div className="flex h-full shrink-0 items-center">
        <button aria-label="Get help" className="relative mr-[14px] flex h-[26px] w-[26px] items-center justify-center rounded-full border-2 border-white bg-[#0e93d2] text-xl font-semibold leading-none text-white">
          ?
          <span className="absolute -bottom-[1px] -right-[3px] flex h-3 w-3 items-center justify-center rounded-full bg-[#e81123] text-[10px] font-bold leading-none">!</span>
        </button>
        <button aria-label="Show hidden icons"><Line size={16} w={1.5}><path d="M0 14l10-9 10 9" /></Line></button>
        <div className="ml-[7px] grid h-full grid-cols-4 grid-rows-2">
          {tray.map(([name, icon]) => (
            <button key={name} aria-label={name} className="flex w-[30px] items-center justify-center">{icon}</button>
          ))}
        </div>
        <button className="w-[45px] text-center">ENG</button>
        <button className="w-[98px] text-center leading-6">
          <span className="block">12:45</span>
          <span className="block">неделя</span>
          <span className="block whitespace-nowrap">20.11.2022 г.</span>
        </button>
        <button aria-label="Notifications" className="ml-[17px] flex">
          <Pic><path d="M0 0h20v15H8v3l-3-3H0z" fill="#fff" /><path d="M3 4.500h13M3 8h13M3 11.500h7" stroke="#1c1c1c" strokeWidth="1.200" /><path d="M17 10.500c.5 3.500-2 6-5.500 5.500 2.500 4.500 8.500 2.500 8.300-2-.1-1.700-1.300-3-2.800-3.500z" fill="#fff" stroke="#1c1c1c" strokeWidth="1.200" /></Pic>
        </button>
        <span className="ml-[25px] mr-[5px] h-full w-px bg-[#6a6a6a]" />
      </div>
    </footer>
  );
}

export default function App() {
  return (
    <div className="flex min-h-screen flex-col overflow-hidden bg-[#111217] font-['Open_Sans',sans-serif] text-sm">
      <Gradients />
      <header>
        <div className="bg-[#f0f0f0]">
          <TopBar />
          <TabStrip />
        </div>
        <div className="bg-[#f9f9fb]">
          <Toolbar />
          <Bookmarks />
        </div>
      </header>
      <div className="relative flex flex-1 font-['Roboto',sans-serif]">
        <SideNav />
        <Settings />
        <div className="absolute right-0 top-[190px] h-[540px] w-[5px] rounded-full bg-[#393a3f]" />
      </div>
      <Taskbar />
    </div>
  );
}
